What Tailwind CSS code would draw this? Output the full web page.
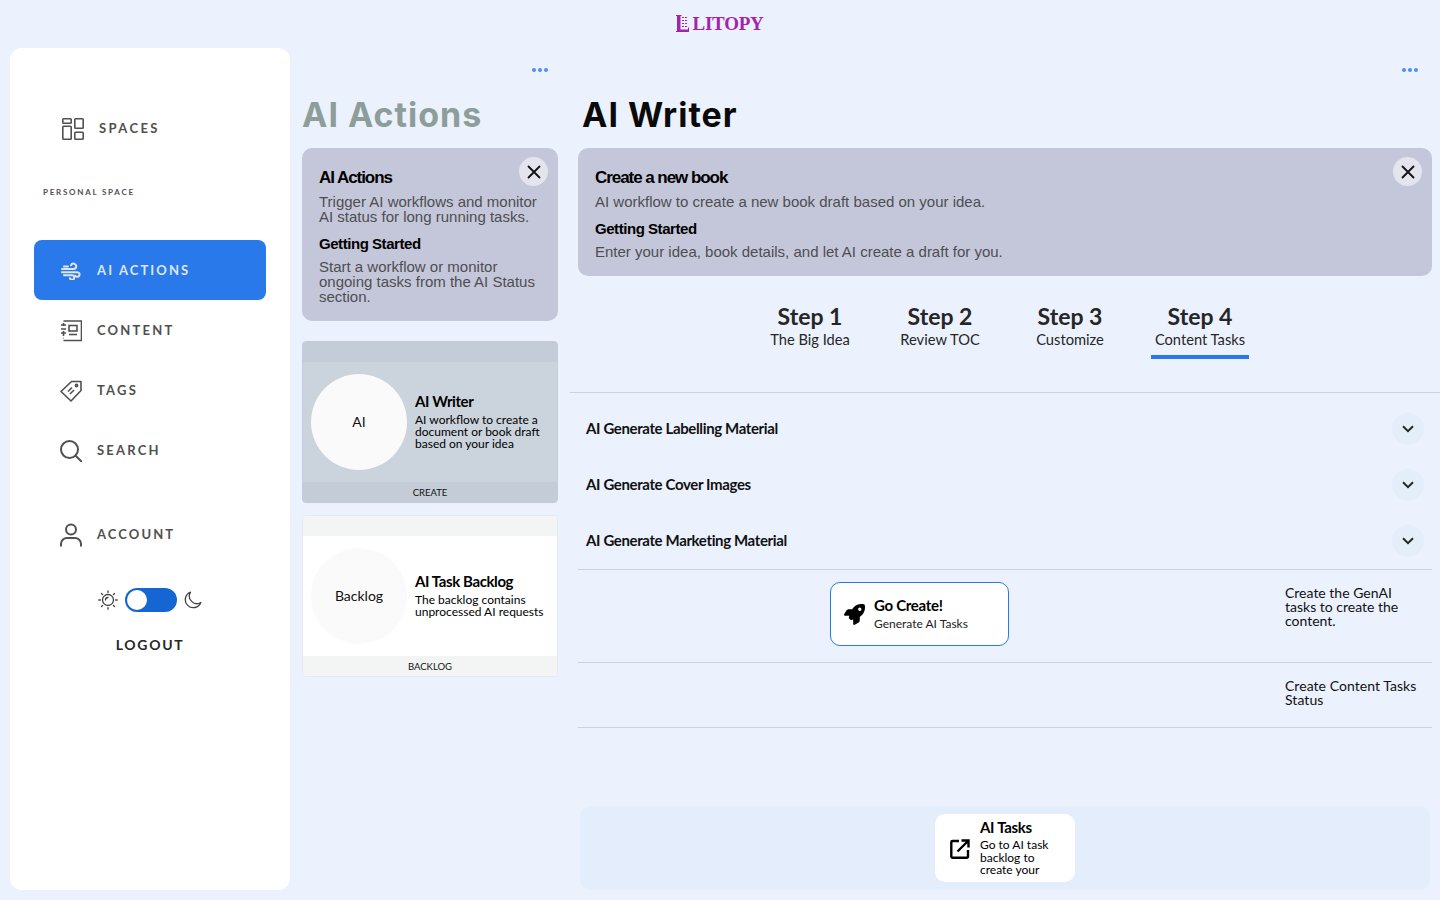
<!DOCTYPE html>
<html lang="en">
<head>
	<meta charset="UTF-8" />
	<title>Litopy - AI Writer</title>
	<meta name="viewport" content="width=device-width, initial-scale=1.0">
	<script src="https://cdn.jsdelivr.net/npm/@tailwindcss/browser@4"></script>
</head>
<body class="bg-[#ebf2fd] h-[900px] w-[1440px] overflow-hidden font-['Liberation_Sans',sans-serif]">
	<!-- logo -->
	<header class="h-[48px] flex justify-center pt-[13px]">
		<div class="flex items-start gap-[3px] h-[24px] text-[#a224ad]">
			<svg width="13" height="17" viewBox="0 0 13 17" class="mt-[2px]" fill="currentColor">
				<path d="M0 0h5.500v1H4.500v13.500H12v-2h1V17H0v-1h1V1H0z"/>
				<path d="M6 2h2v1H6zM9 2h2v1H9zM6 5h2v1H6zM9 5h2v1H9zM6 8h2v1H6zM9 8h2v1H9zM6 11h2v1H6zM9 11h2v1H9z"/>
			</svg>
			<span class="font-['Liberation_Serif',serif] font-bold text-[19px] leading-[22px] tracking-[-0.25px]">LITOPY</span>
		</div>
	</header>

	<div class="flex h-[842px]">
		<!-- sidebar -->
		<aside class="ml-[10px] w-[280px] h-[842px] bg-white rounded-[12px] pt-[69px] font-['Lato',sans-serif] shrink-0">
			<div class="flex items-center h-[24px] pl-[52px] gap-[15px]">
				<svg width="22" height="22" viewBox="0 0 22 22" fill="none" stroke="#505050" stroke-width="1.6">
					<rect x="0.8" y="0.8" width="8.4" height="4.4" rx="0.8"/>
					<rect x="0.8" y="8.3" width="8.4" height="12.9" rx="0.8"/>
					<rect x="12.8" y="0.8" width="8.4" height="9.4" rx="0.8"/>
					<rect x="12.8" y="14.3" width="8.4" height="6.9" rx="0.8"/>
				</svg>
				<span class="text-[13px] font-bold tracking-[2.4px] text-[#505050]">SPACES</span>
			</div>
			<p class="mt-[44px] pl-[33px] h-[14px] leading-[14px] text-[8px] font-bold tracking-[1.75px] text-[#505050]">PERSONAL SPACE</p>

			<nav class="mt-[41px] mx-[24px] flex flex-col">
				<a class="h-[60px] pt-[2px] rounded-[8px] bg-[#2979ea] flex items-center pl-[27px] gap-[16px] text-[#dfe6f2]">
					<svg width="20" height="18" viewBox="0 0 20 18" fill="none" stroke="currentColor" stroke-width="2" stroke-linecap="round">
						<path d="M1 7h11.500a2.700 2.700 0 1 0-2.500-3.700"/>
						<path d="M1 10.200h15.300a2.300 2.300 0 1 1-2 3.500"/>
						<path d="M3 4.500h4M3 13.300h8a2.200 2.200 0 1 1-2 3"/>
					</svg>
					<span class="text-[13px] font-bold tracking-[2.1px]">AI ACTIONS</span>
				</a>
				<a class="h-[60px] pt-[2px] flex items-center pl-[26px] gap-[15px] text-[#505050]">
					<svg width="22" height="22" viewBox="0 0 22 22" fill="none" stroke="currentColor" stroke-width="1.6">
						<path d="M3.500 1h18v19.500H3.500"/>
						<path d="M3.500 18h-.5M1 5h5M1 9h5M1 13h5M3.500 3v3M3.500 11v5"/>
						<rect x="9" y="5.500" width="8" height="5.500"/>
						<path d="M9 14.500h8"/>
					</svg>
					<span class="text-[13px] font-bold tracking-[2.2px]">CONTENT</span>
				</a>
				<a class="h-[60px] pt-[2px] flex items-center pl-[26px] gap-[15px] text-[#505050]">
					<svg width="22" height="22" viewBox="0 0 22 22" fill="none" stroke="currentColor" stroke-width="1.6" stroke-linejoin="round">
						<path d="M1 11.500 11.500 1.500H21v9L11 21z"/>
						<circle cx="16.500" cy="5.500" r="1.100"/>
						<path d="M8 11.500l4-4M10 14l4-4"/>
					</svg>
					<span class="text-[13px] font-bold tracking-[2.2px]">TAGS</span>
				</a>
				<a class="h-[60px] pt-[2px] flex items-center pl-[26px] gap-[15px] text-[#505050]">
					<svg width="22" height="22" viewBox="0 0 22 22" fill="none" stroke="currentColor" stroke-width="2" stroke-linecap="round">
						<circle cx="9.500" cy="9.500" r="8.500"/>
						<path d="M15.700 15.700 21.200 21.200"/>
					</svg>
					<span class="text-[13px] font-bold tracking-[2.2px]">SEARCH</span>
				</a>
				<a class="h-[60px] pt-[2px] mt-[24px] flex items-center pl-[26px] gap-[15px] text-[#505050]">
					<svg width="22" height="24" viewBox="0 0 22 24" fill="none" stroke="currentColor" stroke-width="2">
						<circle cx="11" cy="6.500" r="5"/>
						<path d="M1 23.500v-2.500a6 6 0 0 1 6-6h8a6 6 0 0 1 6 6v2.500"/>
					</svg>
					<span class="text-[13px] font-bold tracking-[2.1px]">ACCOUNT</span>
				</a>
			</nav>

			<div class="mt-[24px] flex items-center justify-center gap-[7px] h-[24px]">
				<svg width="20" height="20" viewBox="0 0 20 20" fill="none" stroke="#404040" stroke-width="1.300" stroke-linecap="round">
					<circle cx="10" cy="10" r="5.500"/>
					<path d="M10 .8v1.600M10 17.600v1.600M.8 10h1.600M17.600 10h1.600M3.500 3.500l1.100 1.100M15.400 15.400l1.100 1.100M3.500 16.500l1.100-1.100M15.400 4.600l1.100-1.100"/>
					<path d="M7.500 10a2.500 2.500 0 0 1 2.500-2.500"/>
				</svg>
				<div class="w-[52px] h-[24px] rounded-full bg-[#1565d2] p-[2px]">
					<div class="w-[20px] h-[20px] rounded-full bg-white"></div>
				</div>
				<svg width="18" height="18" viewBox="0 0 18 18" fill="none" stroke="#404040" stroke-width="1.300" stroke-linejoin="round">
					<path d="M6.500 1.200A8 8 0 1 0 16.800 11.500 7.500 7.500 0 0 1 6.500 1.200z"/>
				</svg>
			</div>
			<p class="mt-[23px] text-center text-[14px] leading-[20px] font-bold tracking-[1.7px] text-[#262626]">LOGOUT</p>
		</aside>

		<!-- ai actions column -->
		<section class="ml-[12px] w-[256px] shrink-0">
			<div class="flex justify-end h-[24px] pr-[10px] pt-[20px] gap-[2px]">
				<span class="w-[4px] h-[4px] rounded-full bg-[#4f8ff5]"></span>
				<span class="w-[4px] h-[4px] rounded-full bg-[#4f8ff5]"></span>
				<span class="w-[4px] h-[4px] rounded-full bg-[#4f8ff5]"></span>
			</div>
			<h1 class="mt-[16px] h-[60px] font-['Inter',sans-serif] font-bold text-[34px] leading-[54px] tracking-[1px] text-[#8d9d99]">AI Actions</h1>

			<div class="relative bg-[#c4c7d9] rounded-[10px] h-[173px] px-[17px] pt-[20px]">
				<button class="absolute top-[9px] right-[10px] w-[29px] h-[29px] rounded-full bg-[#e3e4ee] flex items-center justify-center">
					<svg width="14" height="14" viewBox="0 0 14 14" stroke="#111" stroke-width="1.800" stroke-linecap="round"><path d="M1.500 1.500l11 11M12.500 1.500l-11 11"/></svg>
				</button>
				<h3 class="text-[17px] leading-[20px] font-bold tracking-[-1.05px] text-black">AI Actions</h3>
				<p class="mt-[6px] text-[15px] leading-[15px] text-[#4e4e52]">Trigger AI workflows and monitor AI status for long running tasks.</p>
				<h4 class="mt-[10px] text-[15px] leading-[20px] font-bold tracking-[-0.45px] text-black">Getting Started</h4>
				<p class="mt-[5px] text-[15px] leading-[15px] text-[#4e4e52]">Start a workflow or monitor ongoing tasks from the AI Status section.</p>
			</div>

			<article class="mt-[20px] h-[162px] rounded-[4px] border border-[#c4cdd7] bg-[#cbd4dd] flex flex-col overflow-hidden font-['Lato',sans-serif]">
				<div class="h-[20px] bg-[#c4cdd7] shrink-0"></div>
				<div class="flex-1 flex items-center pl-[8px] gap-[8px]">
					<div class="w-[96px] h-[96px] pb-[2px] rounded-full bg-[#fafafa] flex items-center justify-center text-[14px] text-[#111] shrink-0">AI</div>
					<div class="text-black pb-[2px]">
						<h3 class="text-[15px] leading-[18px] font-bold tracking-[-0.4px]">AI Writer</h3>
						<p class="mt-[4px] text-[12px] leading-[12px]">AI workflow to create a document or book draft based on your idea</p>
					</div>
				</div>
				<div class="h-[20px] bg-[#c4cdd7] shrink-0 text-center text-[9.500px] leading-[21px] text-[#111]">CREATE</div>
			</article>

			<article class="mt-[12px] h-[162px] rounded-[4px] border border-[#e6eaee] bg-white flex flex-col overflow-hidden font-['Lato',sans-serif]">
				<div class="h-[20px] bg-[#f3f5f5] shrink-0"></div>
				<div class="flex-1 flex items-center pl-[8px] gap-[8px]">
					<div class="w-[96px] h-[96px] pb-[2px] rounded-full bg-[#fafafa] flex items-center justify-center text-[14px] text-[#111] shrink-0">Backlog</div>
					<div class="text-black pb-[2px]">
						<h3 class="text-[15px] leading-[18px] font-bold tracking-[-0.4px]">AI Task Backlog</h3>
						<p class="mt-[4px] text-[12px] leading-[12px]">The backlog contains unprocessed AI requests</p>
					</div>
				</div>
				<div class="h-[20px] bg-[#f3f5f5] shrink-0 text-center text-[9.500px] leading-[21px] text-[#111]">BACKLOG</div>
			</article>
		</section>

		<!-- writer column -->
		<main class="ml-[12px] w-[870px] shrink-0">
			<div class="flex justify-end h-[24px] pr-[22px] pt-[20px] gap-[2px]">
				<span class="w-[4px] h-[4px] rounded-full bg-[#4f8ff5]"></span>
				<span class="w-[4px] h-[4px] rounded-full bg-[#4f8ff5]"></span>
				<span class="w-[4px] h-[4px] rounded-full bg-[#4f8ff5]"></span>
			</div>
			<h1 class="mt-[16px] ml-[12px] h-[60px] font-['Inter',sans-serif] font-bold text-[34px] leading-[54px] tracking-[1px] text-[#0a0a0a]">AI Writer</h1>

			<div class="relative ml-[8px] mr-[8px] bg-[#c4c7d9] rounded-[10px] h-[128px] px-[17px] pt-[20px]">
				<button class="absolute top-[9px] right-[10px] w-[29px] h-[29px] rounded-full bg-[#e3e4ee] flex items-center justify-center">
					<svg width="14" height="14" viewBox="0 0 14 14" stroke="#111" stroke-width="1.800" stroke-linecap="round"><path d="M1.500 1.500l11 11M12.500 1.500l-11 11"/></svg>
				</button>
				<h3 class="text-[17px] leading-[20px] font-bold tracking-[-1.05px] text-black">Create a new book</h3>
				<p class="mt-[4px] text-[15px] leading-[20px] text-[#4e4e52]">AI workflow to create a new book draft based on your idea.</p>
				<h4 class="mt-[7px] text-[15px] leading-[20px] font-bold tracking-[-0.45px] text-black">Getting Started</h4>
				<p class="mt-[3px] text-[15px] leading-[20px] text-[#4e4e52]">Enter your idea, book details, and let AI create a draft for you.</p>
			</div>

			<div class="font-['Lato',sans-serif]">
				<!-- steps -->
				<div class="h-[117px] border-b border-[#ced3db] flex justify-center">
					<div class="flex mt-[27px] h-[56px]">
						<div class="w-[130px] flex flex-col items-center text-[#262626]"><span class="text-[23px] leading-[26px] font-bold">Step 1</span><span class="text-[14.700px] leading-[20px]">The Big Idea</span></div>
						<div class="w-[130px] flex flex-col items-center text-[#262626]"><span class="text-[23px] leading-[26px] font-bold">Step 2</span><span class="text-[14.700px] leading-[20px]">Review TOC</span></div>
						<div class="w-[130px] flex flex-col items-center text-[#262626]"><span class="text-[23px] leading-[26px] font-bold">Step 3</span><span class="text-[14.700px] leading-[20px]">Customize</span></div>
						<div class="w-[130px] flex flex-col items-center text-[#262626]">
							<span class="text-[23px] leading-[26px] font-bold">Step 4</span><span class="text-[14.700px] leading-[20px]">Content Tasks</span>
							<span class="mt-[6px] w-[98px] h-[4px] bg-[#2979ea] shrink-0"></span>
						</div>
					</div>
				</div>

				<!-- accordion -->
				<div class="pt-[8px]">
					<div class="h-[56px] ml-[16px] mr-[16px] flex items-center justify-between">
						<span class="pb-[2px] text-[15px] font-bold tracking-[-0.37px] text-[#111]">AI Generate Labelling Material</span>
						<span class="w-[32px] h-[32px] rounded-full bg-[#e4eefb] flex items-center justify-center"><svg width="12" height="8" viewBox="0 0 12 8" fill="none" stroke="#262626" stroke-width="2"><path d="M1 1.200l5 5 5-5"/></svg></span>
					</div>
					<div class="h-[56px] ml-[16px] mr-[16px] flex items-center justify-between">
						<span class="pb-[2px] text-[15px] font-bold tracking-[-0.37px] text-[#111]">AI Generate Cover Images</span>
						<span class="w-[32px] h-[32px] rounded-full bg-[#e4eefb] flex items-center justify-center"><svg width="12" height="8" viewBox="0 0 12 8" fill="none" stroke="#262626" stroke-width="2"><path d="M1 1.200l5 5 5-5"/></svg></span>
					</div>
					<div class="h-[56px] ml-[16px] mr-[16px] flex items-center justify-between">
						<span class="pb-[2px] text-[15px] font-bold tracking-[-0.37px] text-[#111]">AI Generate Marketing Material</span>
						<span class="w-[32px] h-[32px] rounded-full bg-[#e4eefb] flex items-center justify-center"><svg width="12" height="8" viewBox="0 0 12 8" fill="none" stroke="#262626" stroke-width="2"><path d="M1 1.200l5 5 5-5"/></svg></span>
					</div>
				</div>

				<!-- actions -->
				<div class="mx-[8px] border-t border-[#ced3db]">
					<div class="h-[93px] border-b border-[#ced3db] flex items-start">
						<button class="ml-[252px] mt-[12px] w-[179px] h-[64px] rounded-[10px] border border-[#2979ea] bg-white flex items-center pl-[13px] gap-[9px] text-left shrink-0">
							<svg width="21" height="21" viewBox="0 0 512 512" fill="#000"><path d="M156.600 384.900L125.700 354c-8.500-8.500-11.500-20.800-7.700-32.200c3-8.900 7-20.500 11.800-33.800L24 288c-8.600 0-16.600-4.600-20.900-12.100s-4.200-16.700 .2-24.100l52.500-88.500c13-21.900 36.500-35.300 61.900-35.300l82.300 0c2.400-4 4.800-7.700 7.200-11.300C289.100-4.100 411.100-8.100 483.900 5.300c11.600 2.100 20.600 11.200 22.800 22.800c13.400 72.900 9.300 194.800-111.400 276.700c-3.500 2.400-7.300 4.800-11.300 7.200l0 82.300c0 25.400-13.400 49-35.300 61.900l-88.500 52.500c-7.400 4.400-16.600 4.500-24.100 .2s-12.100-12.200-12.100-20.900l0-107.200c-14.100 4.900-26.400 8.900-35.700 11.900c-11.200 3.600-23.400 .5-31.800-7.800zM384 168a40 40 0 1 0 0-80 40 40 0 1 0 0 80z"/></svg>
							<span class="text-black">
								<span class="block text-[15px] leading-[18px] font-bold tracking-[-0.3px]">Go Create!</span>
								<span class="block mt-[2px] text-[12px] leading-[16px] text-[#222]">Generate AI Tasks</span>
							</span>
						</button>
						<p class="ml-[276px] mt-[16px] w-[140px] text-[14px] leading-[14px] text-[#111]">Create the GenAI tasks to create the content.</p>
					</div>
					<div class="h-[65px] border-b border-[#ced3db] flex items-start">
						<p class="ml-[707px] mt-[16px] w-[140px] text-[14px] leading-[14px] tracking-[0.05px] text-[#111]">Create Content Tasks Status</p>
					</div>
				</div>

				<!-- bottom bar -->
				<div class="mt-[78px] ml-[10px] w-[850px] h-[84px] rounded-[10px] bg-[#e3edfc] pt-[8px]">
					<button class="ml-[355px] w-[140px] h-[68px] rounded-[10px] bg-white flex items-center pl-[15px] gap-[10px] text-left overflow-hidden">
						<svg width="20" height="20" viewBox="0 0 20 20" fill="none" stroke="#000" stroke-width="2.400" class="shrink-0 mt-[2px]">
							<path d="M9 2H2.500a1.200 1.200 0 0 0-1.200 1.200v14.300a1.200 1.200 0 0 0 1.200 1.200h14.300a1.200 1.200 0 0 0 1.200-1.200V11"/>
							<path d="M7.500 12.500 18 2M11.500 1.500h7v7"/>
						</svg>
						<span class="w-[74px] h-[68px] pt-[4px] overflow-hidden text-black">
							<span class="block text-[15px] leading-[18px] font-bold tracking-[-0.3px]">AI Tasks</span>
							<span class="block mt-[3px] text-[12px] leading-[12.500px]">Go to AI task backlog to create your</span>
						</span>
					</button>
				</div>
			</div>
		</main>
	</div>
</body>
</html>
